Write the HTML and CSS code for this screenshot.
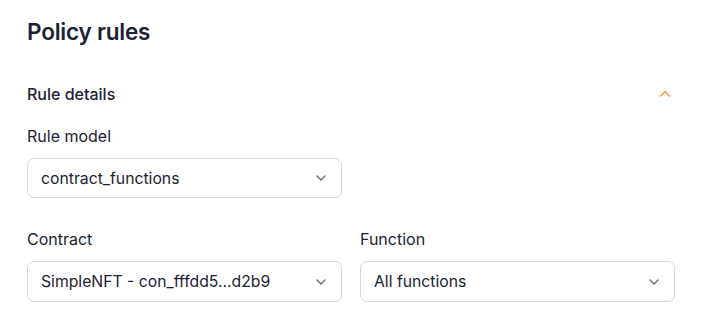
FILE: index.html
```html
<!DOCTYPE html>
<html lang="en">
<head>
    <meta charset="UTF-8">
    <title>Policy rules</title>
    <link rel="stylesheet" href="styles.css">
</head>
<body>

<div class="page">
    <h1 class="title">Policy rules</h1>

    <div class="section-head">
        <h2>Rule details</h2>
        <svg class="caret-up" width="16" height="16" viewBox="0 0 16 16" fill="none">
            <path d="M3.5 10 L8 5.5 L12.5 10" stroke="#f59a3e" stroke-width="1.6" stroke-linecap="round" stroke-linejoin="round"/>
        </svg>
    </div>

    <div class="field">
        <label>Rule model</label>
        <div class="select half">
            <span>contract_functions</span>
            <svg class="caret" width="16" height="16" viewBox="0 0 16 16" fill="none">
                <path d="M4 6 L8 10 L12 6" stroke="#6b7280" stroke-width="1.5" stroke-linecap="round" stroke-linejoin="round"/>
            </svg>
        </div>
    </div>

    <div class="row">
        <div class="field">
            <label>Contract</label>
            <div class="select">
                <span>SimpleNFT - con_fffdd5...d2b9</span>
                <svg class="caret" width="16" height="16" viewBox="0 0 16 16" fill="none">
                    <path d="M4 6 L8 10 L12 6" stroke="#6b7280" stroke-width="1.5" stroke-linecap="round" stroke-linejoin="round"/>
                </svg>
            </div>
        </div>
        <div class="field">
            <label>Function</label>
            <div class="select">
                <span>All functions</span>
                <svg class="caret" width="16" height="16" viewBox="0 0 16 16" fill="none">
                    <path d="M4 6 L8 10 L12 6" stroke="#6b7280" stroke-width="1.5" stroke-linecap="round" stroke-linejoin="round"/>
                </svg>
            </div>
        </div>
    </div>
</div>

</body>
</html>
```

FILE: styles.css
```css
body {
    margin: 0;
    padding: 0;
    font-family: Inter, "Noto Sans", sans-serif;
    color: #1c2233;
    background: #fff;
}
.page {
    width: 648px;
    padding: 16px 0 0 27px;
}
.title {
    margin: 0;
    font-size: 22.5px;
    font-weight: 600;
    line-height: 32px;
    letter-spacing: -0.2px;
}
.section-head {
    display: flex;
    justify-content: space-between;
    align-items: center;
    margin-top: 34px;
    padding-right: 2px;
}
.section-head h2 {
    margin: 0;
    font-size: 16px;
    font-weight: 500;
    line-height: 24px;
}
.field {
    display: flex;
    flex-direction: column;
}
.field label {
    font-size: 16px;
    line-height: 24px;
    margin-top: 18px;
    margin-bottom: 10px;
}
.select {
    display: flex;
    justify-content: space-between;
    align-items: center;
    height: 40px;
    box-sizing: border-box;
    border: 1px solid #d4d6dd;
    border-radius: 7px;
    padding: 0 12px 0 13px;
    font-size: 15.75px;
}
.select.half { width: 315px; }
.row {
    display: grid;
    grid-template-columns: 315px 315px;
    gap: 18px;
    margin-top: 11px;
}
.row .select { height: 41px; }
```
